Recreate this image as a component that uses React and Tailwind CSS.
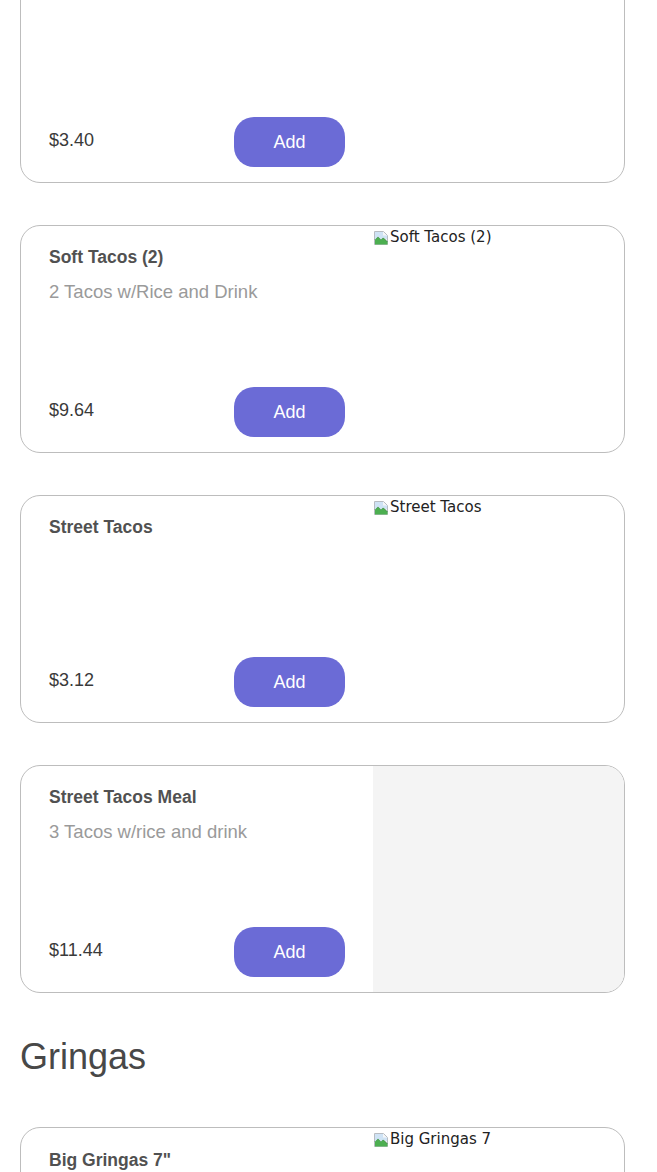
import React from 'react'

const items = [
  { name: 'Taco Meal', desc: '', price: '$3.40', img: 'blank', hidden: true },
  { name: 'Soft Tacos (2)', desc: '2 Tacos w/Rice and Drink', price: '$9.64', img: 'Soft Tacos (2)' },
  { name: 'Street Tacos', desc: '', price: '$3.12', img: 'Street Tacos' },
  { name: 'Street Tacos Meal', desc: '3 Tacos w/rice and drink', price: '$11.44', img: null },
]

function BrokenImage() {
  return (
    <svg width="16" height="16" viewBox="0 0 16 16" className="shrink-0">
      <path d="M1.5 1.5h9l4 4v9h-13z" fill="#f4f6f8" stroke="#b8bcc2" />
      <path d="M2 14.5V9.5l3-3 3 3 2-2 4.5 4.5v2.5z" fill="#4caf50" />
      <path d="M2 9.5l3-3 3 3 2-2 4.5 4.5" fill="none" stroke="#2e7d32" strokeWidth="0.8" />
      <path d="M2 2h8v3.5h4v4L10 7.5 8 9.5 5 6.5 2 9.5z" fill="#cfe3f5" />
    </svg>
  )
}

function AltText({ text }) {
  return (
    <div className="flex items-center pt-[2px] font-['DejaVu_Sans',sans-serif] text-[15px] leading-[19px] text-[#222]">
      <BrokenImage />
      <span className="ml-[1px]">{text}</span>
    </div>
  )
}

function ItemCard({ item }) {
  return (
    <div className="flex h-[228px] rounded-[20px] border border-[#bdbdbd] bg-white overflow-hidden">
      <div className="flex flex-1 flex-col pl-[28px] pr-[28px] pt-[21px] pb-[15px]">
        {!item.hidden && (
          <div className="text-[17.5px] leading-[20px] font-bold text-[#515151]">{item.name}</div>
        )}
        {item.desc && (
          <div className="mt-[15px] text-[18.5px] leading-[20px] text-[#9a9a9a]">{item.desc}</div>
        )}
        <div className="mt-auto flex items-center justify-between">
          <span className="-mt-[3px] text-[18px] text-[#3a3a3a]">{item.price}</span>
          <button className="h-[50px] w-[111px] rounded-[20px] bg-[#6b6bd6] text-[18px] text-white">
            Add
          </button>
        </div>
      </div>
      {item.img === 'blank' ? (
        <div className="w-[251px] shrink-0" />
      ) : item.img ? (
        <div className="w-[251px] shrink-0">
          <AltText text={item.img} />
        </div>
      ) : (
        <div className="w-[251px] shrink-0 bg-[#f4f4f4]" />
      )}
    </div>
  )
}

export default function App() {
  return (
    <div className="h-[1172px] overflow-hidden bg-white pl-[20px] font-['Liberation_Sans',Arial,sans-serif]">
      <div className="w-[605px]">
        <div className="-mt-[45px] flex flex-col gap-[42px]">
          {items.map((item) => (
            <ItemCard key={item.price} item={item} />
          ))}
        </div>

        <h2 className="mt-[43px] mb-[49px] text-[36px] leading-[42px] text-[#484848]">Gringas</h2>

        <div className="flex h-[228px] rounded-[20px] border border-[#bdbdbd] bg-white overflow-hidden">
          <div className="flex flex-1 flex-col pl-[28px] pr-[28px] pt-[22px]">
            <div className="text-[17.5px] leading-[20px] font-bold text-[#515151]">Big Gringas 7"</div>
          </div>
          <div className="w-[251px] shrink-0">
            <AltText text="Big Gringas 7" />
          </div>
        </div>
      </div>
    </div>
  )
}
